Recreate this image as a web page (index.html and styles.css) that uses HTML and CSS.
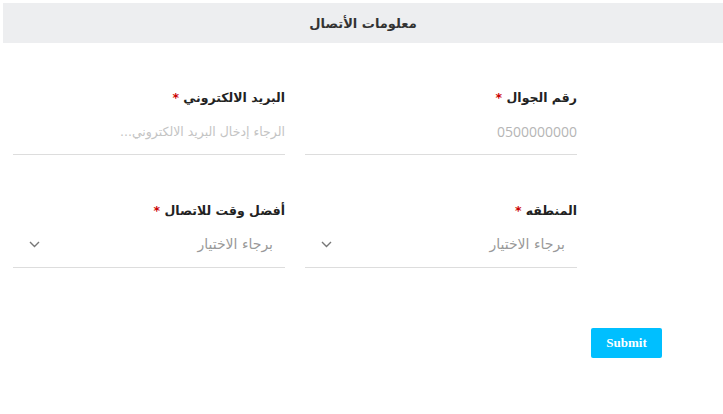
FILE: index.html
```html
<!DOCTYPE html>
<html lang="ar" dir="rtl">
<head>
<meta charset="utf-8">
<link rel="stylesheet" href="styles.css">
</head>
<body>
<div class="page">
  <div class="header">معلومات الأتصال</div>
  <form class="form">
    <div class="grid">
      <div class="field">
        <label class="label">رقم الجوال <span class="req">*</span></label>
        <div class="control"><span class="placeholder num">0500000000</span></div>
      </div>
      <div class="field">
        <label class="label">البريد الالكتروني <span class="req">*</span></label>
        <div class="control"><span class="placeholder light">الرجاء إدخال البريد الالكتروني...</span></div>
      </div>
      <div class="field">
        <label class="label">المنطقه <span class="req">*</span></label>
        <div class="control select"><span class="placeholder">برجاء الاختيار</span>
          <svg class="chev" width="11" height="7" viewBox="0 0 11 7"><path d="M1 1l4.5 4.5L10 1" fill="none" stroke="#777" stroke-width="1.4"/></svg>
        </div>
      </div>
      <div class="field">
        <label class="label">أفضل وقت للاتصال <span class="req">*</span></label>
        <div class="control select"><span class="placeholder">برجاء الاختيار</span>
          <svg class="chev" width="11" height="7" viewBox="0 0 11 7"><path d="M1 1l4.5 4.5L10 1" fill="none" stroke="#777" stroke-width="1.4"/></svg>
        </div>
      </div>
    </div>
    <div class="actions"><button type="button" class="submit">Submit</button></div>
  </form>
</div>
</body>
</html>
```
FILE: styles.css
```css
* { box-sizing: border-box; }
html, body { margin: 0; padding: 0; background: #fff; }
body {
  font-family: "DejaVu Sans", "Noto Sans", sans-serif;
  color: #222;
}
.page { padding: 3px 0 0 3px; }
.header {
  height: 40px;
  background: #edeef0;
  display: flex;
  align-items: center;
  justify-content: center;
  font-size: 13px;
  font-weight: bold;
  color: #333;
}
.form { padding: 45px 146px 0 10px; }
.grid {
  display: grid;
  grid-template-columns: 272px 272px;
  column-gap: 20px;
  row-gap: 46px;
}
.field { display: flex; flex-direction: column; }
.label {
  font-size: 12.5px;
  font-weight: bold;
  color: #222;
  height: 20px;
  line-height: 20px;
}
.req { color: #c00; }
.control {
  height: 47px;
  border-bottom: 1px solid #ddd;
  display: flex;
  align-items: center;
  justify-content: space-between;
  padding: 0 0 0 16px;
  font-size: 14px;
}
.control.select { padding-right: 12px; }
.placeholder { color: #999; }
.placeholder.light { color: #c4c4c4; font-size: 12.5px; }
.num { font-family: "Open Sans", sans-serif; color: #b5b5b5; }
.actions { display: flex; justify-content: flex-start; margin-right: -85px; margin-top: 60px; }
.submit {
  width: 71px;
  height: 30px;
  background: #00bfff;
  border: none;
  border-radius: 2px;
  color: #fff;
  font-family: "Liberation Serif", serif;
  font-weight: bold;
  font-size: 13px;
}
```
